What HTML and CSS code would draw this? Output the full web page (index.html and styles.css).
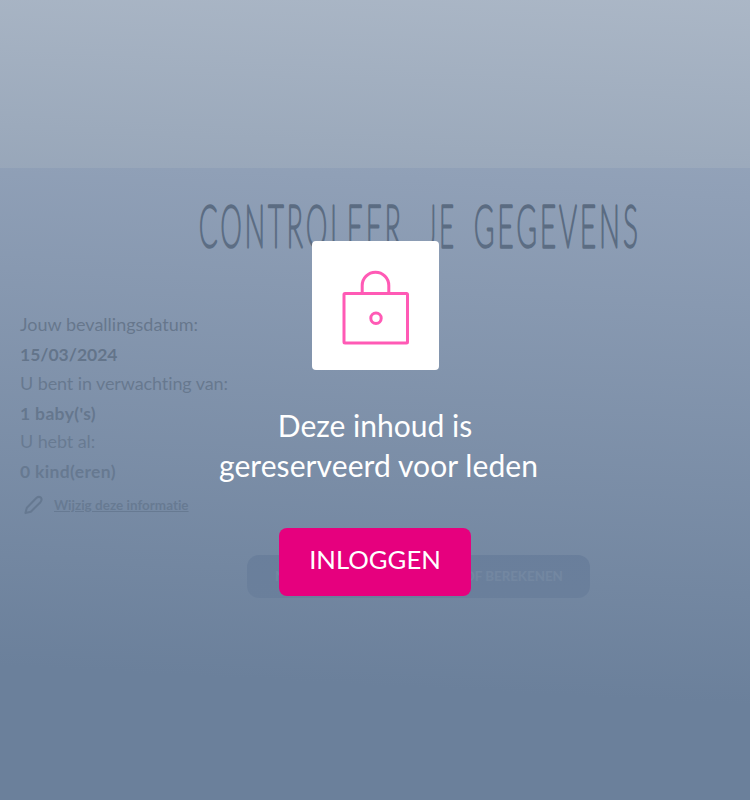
FILE: index.html
```html
<!DOCTYPE html>
<html lang="nl">
<head>
<meta charset="UTF-8">
<meta name="viewport" content="width=device-width, initial-scale=1.0">
<title>Controleer je gegevens</title>
<link rel="stylesheet" href="styles.css">
</head>
<body>

<div class="page">
  <div class="top-space"></div>
  <main class="content">
    <h1 class="title">
      <svg width="442" height="56" viewBox="0 0 442 56">
        <text x="1" y="47" textLength="205" lengthAdjust="spacingAndGlyphs">CONTROLEER</text>
        <text x="228" y="47" textLength="31" lengthAdjust="spacingAndGlyphs">JE</text>
        <text x="276" y="47" textLength="167" lengthAdjust="spacingAndGlyphs">GEGEVENS</text>
      </svg>
    </h1>
    <div class="details">
      <div class="label">Jouw bevallingsdatum:</div>
      <div class="value date">15/03/2024</div>
      <div class="label narrow">U bent in verwachting van:</div>
      <div class="value">1 baby('s)</div>
      <div class="label narrow">U hebt al:</div>
      <div class="value">0 kind(eren)</div>
    </div>
    <a class="edit-link" href="#">
      <svg class="pencil" viewBox="0 0 20 20">
        <path d="M1.5 18.5 L3 12.8 L13 2.7 Q15.5 .5 17.8 2.3 Q19.4 4.5 17.3 7 L7.2 17 Z"/>
      </svg>
      <span>Wijzig deze informatie</span>
    </a>
    <button class="calc-button">NIEUWE DATUM AANPASSEN OF BEREKENEN</button>
  </main>
</div>

<div class="overlay">
  <div class="lock-box">
    <svg width="68" height="76" viewBox="0 0 68 76">
      <rect x="2" y="23.5" width="63.5" height="49.5" rx="1"/>
      <path d="M20.2 23 V15.5 A13.3 13.3 0 0 1 46.8 15.5 V23"/>
      <circle cx="34" cy="48.3" r="5.2"/>
    </svg>
  </div>
  <p class="message">Deze inhoud is <br><span>gereserveerd voor leden</span></p>
  <a class="login-button" href="#">INLOGGEN</a>
</div>

</body>
</html>
```
FILE: styles.css
```css
body {
  margin: 0;
  font-family: Lato, sans-serif;
  overflow: hidden;
}

.page {
  height: 800px;
  display: flex;
  flex-direction: column;
}

.top-space {
  height: 168px;
  background-color: #fff;
}

.content {
  flex: 1;
  display: flex;
  flex-direction: column;
  background-color: #e2e7f5;
  color: #555;
}

.title {
  margin: 32px 0 0 198px;
  height: 56px;
}

.title svg {
  display: block;
  overflow: visible;
}

.title text {
  font-family: Lato, sans-serif;
  font-size: 58px;
  font-weight: 100;
  letter-spacing: 7px;
  fill: #343b45;
  stroke: #343b45;
  stroke-width: 3.4;
  stroke-linejoin: round;
  stroke-linecap: round;
}

.details {
  margin: 54px 0 0 20px;
  font-size: 18px;
  font-variant-ligatures: none;
}

.label {
  height: 29px;
  line-height: 29px;
}

.narrow {
  letter-spacing: -.1px;
}

.value {
  height: 29.6px;
  line-height: 32px;
  font-weight: bold;
  font-size: 17.5px;
  letter-spacing: .35px;
  color: #444;
}

.date {
  letter-spacing: 0;
}

.edit-link {
  display: flex;
  align-items: center;
  margin: 9px 0 0 24px;
  height: 20px;
  color: #444;
  font-size: 13.5px;
  font-weight: bold;
  font-variant-ligatures: none;
}

.pencil {
  width: 19px;
  height: 20px;
  margin-right: 11px;
  fill: none;
  stroke: #333;
  stroke-width: 2.2;
  stroke-linejoin: round;
}

.calc-button {
  margin: 40px 0 0 247px;
  width: 343px;
  height: 43px;
  border: 0;
  border-radius: 12px;
  padding: 0 28px;
  background-color: #5b70a0;
  color: #d8e0f0;
  font-family: Lato, sans-serif;
  font-size: 13.3px;
  font-weight: bold;
  text-align: right;
  white-space: nowrap;
}

/* fades the page out towards the bottom */
.overlay {
  position: absolute;
  top: 0;
  left: 0;
  width: 100%;
  height: 800px;
  box-sizing: border-box;
  padding-top: 241px;
  display: flex;
  flex-direction: column;
  align-items: center;
  background: linear-gradient(183deg, rgba(107, 128, 155, 0.57) 0%, #6b809b 84%);
}

.lock-box {
  width: 127px;
  height: 129px;
  display: flex;
  align-items: center;
  justify-content: center;
  border-radius: 4px;
  background-color: #fff;
}

.lock-box svg {
  fill: none;
  stroke: #ff5ab5;
  stroke-width: 3;
  margin: 4px 0 0 1px;
}

.message {
  margin: 35px 0 0;
  color: #fff;
  font-size: 30px;
  line-height: 40px;
  text-align: center;
}

.message span {
  margin-left: 7px;
  letter-spacing: .08px;
}

.login-button {
  width: 192px;
  height: 68px;
  margin-top: 43px;
  border-radius: 8px;
  background-color: #e6007e;
  color: #fff;
  font-size: 25.7px;
  line-height: 62px;
  text-align: center;
  text-decoration: none;
}
```
